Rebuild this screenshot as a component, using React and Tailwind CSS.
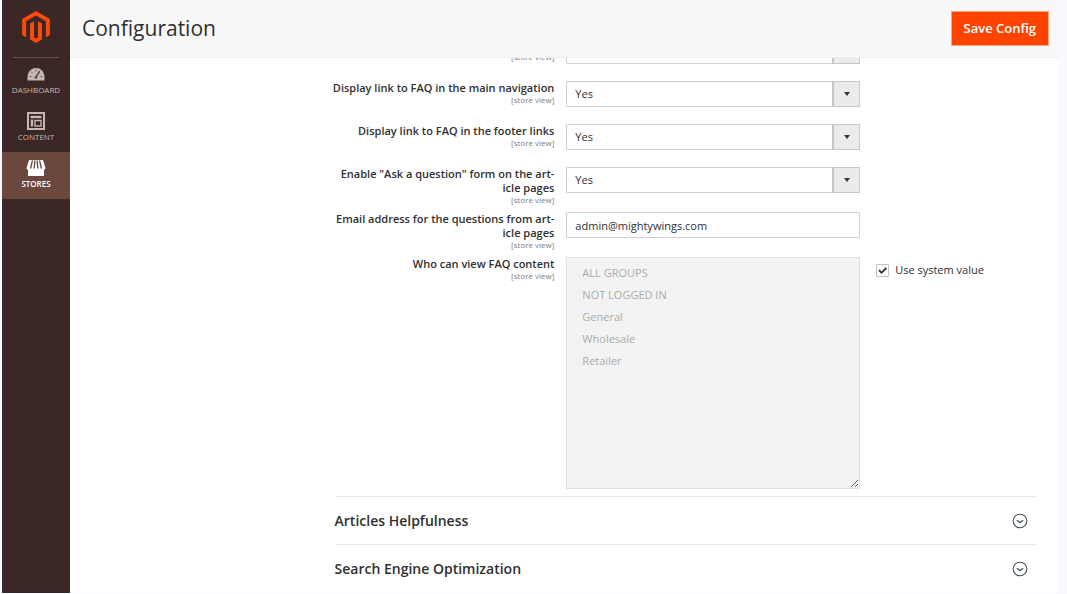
import React from 'react';

const MagentoLogo = () => (
  <svg viewBox="0 0 24 24" className="w-8 h-8 fill-[#fb4a0a]" aria-hidden="true">
    <path d="M12 24l-4.455-2.572v-12l2.97-1.715v12.001l1.485.902 1.485-.902V7.713l2.971 1.715v12L12 24zM22.391 6v12l-2.969 1.714V7.713L12 3.43 4.574 7.713v12.001L1.609 18V6L12 0l10.391 6z" />
  </svg>
);

const DashboardIcon = () => (
  <svg viewBox="0 0 18 18" className="w-[18px] h-[18px]" aria-hidden="true">
    <path d="M0.5 15.500V11.500a8.500 8.500 0 0 1 17 0V15.500z" fill="currentColor" />
    <g stroke="#5a433e" strokeWidth="0.900" fill="none" strokeLinecap="round">
      <path d="M3 11.500h1M4.500 7l.7.7M9 5v1M14 11.500h1" />
      <path d="M12.500 6.500L9.300 11.500" strokeWidth="1.400" />
    </g>
    <circle cx="9" cy="12.300" r="1.400" fill="#5a433e" />
  </svg>
);

const ContentIcon = () => (
  <svg viewBox="0 0 18 18" className="w-[18px] h-[18px]" fill="none" stroke="currentColor" aria-hidden="true">
    <rect x="1" y="1" width="16" height="16" strokeWidth="2" />
    <path d="M3.500 5h11" strokeWidth="2.400" />
    <path d="M5 7.500v7" strokeWidth="2.400" />
    <rect x="8" y="8.500" width="6" height="5.500" strokeWidth="1.400" />
  </svg>
);

const StoresIcon = () => (
  <svg viewBox="0 0 20 18" className="w-5 h-[18px]" aria-hidden="true">
    <path d="M3 1h14l2.500 8a1.800 1.800 0 0 1-1.500 1.800V17H2v-6.200A1.800 1.800 0 0 1 .5 9z" fill="currentColor" />
    <path d="M6.300 2L4.700 9M8.900 2L8.200 9M11.100 2l.7 7M13.700 2l1.600 7" stroke="#6b473e" strokeWidth="1.300" strokeLinecap="round" />
  </svg>
);

const ChevronIcon = () => (
  <svg viewBox="0 0 16 16" className="w-4 h-4" fill="none" stroke="#41545a" aria-hidden="true">
    <circle cx="8" cy="8" r="6.800" strokeWidth="1.100" />
    <path d="M4.800 7.200L8 9.600l3.200-2.400" strokeWidth="1.300" />
  </svg>
);

const navItems = [
  { name: 'Dashboard', icon: DashboardIcon },
  { name: 'Content', icon: ContentIcon },
  { name: 'Stores', icon: StoresIcon, active: true },
];

const groups = ['ALL GROUPS', 'NOT LOGGED IN', 'General', 'Wholesale', 'Retailer'];

const Field = ({ id, label, children, extra }) => (
  <div className="grid grid-cols-[220fr_294fr_165fr] gap-x-3">
    <div className="-ml-1 pb-[7px] text-right">
      <label htmlFor={id} className="block min-h-[14px] text-[11px] leading-[14px] font-semibold text-[#303030]">
        {label}
      </label>
      <span className="block text-[8px] leading-[10px] text-[#808080]">[store view]</span>
    </div>
    {children}
    <div className="pl-1">{extra}</div>
  </div>
);

const YesNoField = ({ id, label, hint }) => (
  <Field id={id} label={label}>
    <div className="relative mb-[17px] h-[26px]">
      <select
        id={id}
        aria-label={hint}
        defaultValue="Yes"
        className="block w-full h-full appearance-none border border-[#ccd0d0] rounded-[1px] bg-white pl-2 pr-8 text-[11px] text-[#303030]"
      >
        <option>Yes</option>
        <option>No</option>
      </select>
      <span className="absolute inset-y-0 right-0 w-7 flex items-center justify-center pointer-events-none border border-l-2 border-[#c6c8c8] bg-[#ebebeb]">
        <svg viewBox="0 0 6 4" className="w-[6px] h-1 fill-[#41302c]" aria-hidden="true">
          <path d="M0 0h6L3 4z" />
        </svg>
      </span>
    </div>
  </Field>
);

const App = () => {
  return (
    <div className="flex min-h-screen pl-[2px] pr-[9px] pb-px bg-[#f8faff] font-['Open_Sans',sans-serif] text-[#303030]">
      <nav className="w-[68px] shrink-0 bg-[#3b2725]">
        <a href="#home" aria-label="Magento" className="flex justify-center h-[58px] mx-[11px] pt-[11px] border-b border-[#6b4f45]">
          <MagentoLogo />
        </a>
        {navItems.map(({ name, icon: Icon, active }) => (
          <a
            key={name}
            href={`#${name.toLowerCase()}`}
            className={`flex flex-col items-center gap-[2px] h-[47px] pt-[7px] text-[8px] leading-[10px] uppercase ${
              active ? 'bg-[#6b473e] text-white font-semibold' : 'text-[#c4b8b2]'
            }`}
          >
            <Icon />
            {name}
          </a>
        ))}
      </nav>

      <div className="flex-1 min-w-0 bg-white overflow-hidden">
        <header className="relative z-10 flex items-center justify-between h-[58px] pl-3 pr-[9px] bg-[#f8f8f8] border-b border-[#f0f0f0]">
          <h1 className="pb-[2px] text-[21px] leading-7">Configuration</h1>
          <button type="button" className="h-[35px] px-3 bg-[#ff4400] border border-[#f9a27e] text-[13px] font-semibold text-white">
            Save Config
          </button>
        </header>

        {/* the form is scrolled, its first row runs under the header */}
        <main className="w-[71.1%] ml-auto mr-[21px] -mt-5">
          <form>
            <YesNoField id="breadcrumbs" hint="Enabled" />
            <YesNoField id="main-nav" label="Display link to FAQ in the main navigation" />
            <YesNoField id="footer-links" label="Display link to FAQ in the footer links" />
            <YesNoField id="ask-form" label={'Enable "Ask a question" form on the art\u00adicle pages'} />
            <Field id="email" label={'Email address for the questions from art\u00adicle pages'}>
              <input
                id="email"
                type="email"
                defaultValue="admin@mightywings.com"
                className="h-[26px] w-full border border-[#ccd0d0] rounded-[1px] px-2 text-[11px]"
              />
            </Field>
            <Field
              id="groups"
              label="Who can view FAQ content"
              extra={
                <label className="flex items-center gap-[6px] h-[26px] text-[11px]">
                  <span className="grid">
                    <input
                      type="checkbox"
                      defaultChecked
                      className="peer [grid-area:1/1] w-[13px] h-[13px] appearance-none border border-[#bcc4c6] rounded-[1px] bg-white"
                    />
                    <svg viewBox="0 0 13 13" className="[grid-area:1/1] w-[13px] h-[13px] invisible peer-checked:visible pointer-events-none" fill="none" stroke="#303030" strokeWidth="1.800" aria-hidden="true">
                      <path d="M3 6.200l2.500 2.600L10.300 4" />
                    </svg>
                  </span>
                  Use system value
                </label>
              }
            >
              <select
                id="groups"
                multiple
                disabled
                className="h-[232px] w-full mb-[7px] resize-y border border-[#e0e2e2] bg-[#f3f3f3] px-[11px] py-[7px] text-[11px] opacity-100"
              >
                {groups.map((group) => (
                  <option key={group} className="h-[22px] px-1 py-0 leading-[22px] text-[#aaacac]">
                    {group}
                  </option>
                ))}
              </select>
            </Field>
          </form>

          {['Articles Helpfulness', 'Search Engine Optimization'].map((title) => (
            <section key={title} className="border-t border-[#e6e6e6]">
              <button type="button" className="flex items-center justify-between w-full h-[47px] pr-[9px] text-[14px] font-semibold">
                {title}
                <ChevronIcon />
              </button>
            </section>
          ))}
        </main>
      </div>
    </div>
  );
};

export default App;
